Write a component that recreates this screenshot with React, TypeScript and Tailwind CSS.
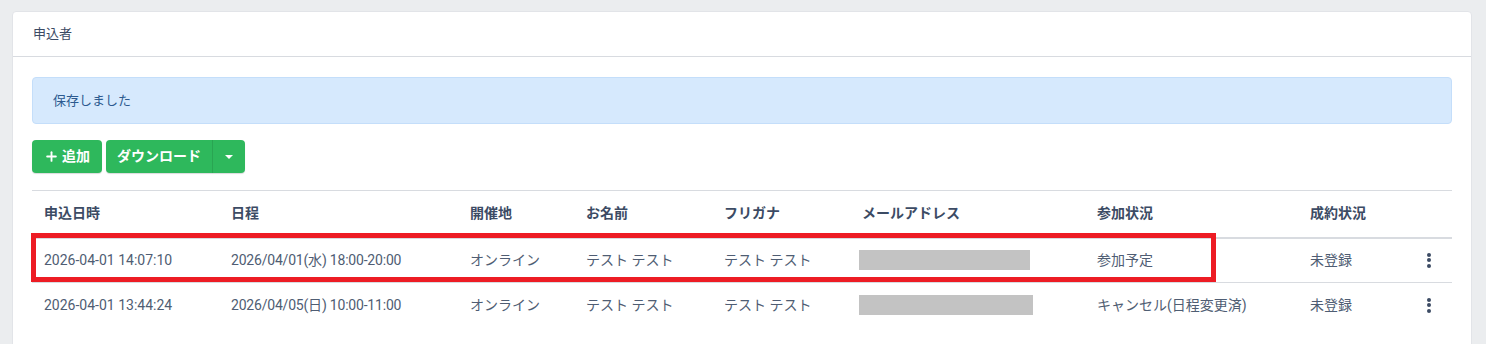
import { Plus } from "lucide-react";

const rows = [
  {
    appliedAt: "2026-04-01 14:07:10",
    schedule: "2026/04/01(水) 18:00-20:00",
    venue: "オンライン",
    name: "テスト テスト",
    kana: "テスト テスト",
    mailWidth: 171,
    status: "参加予定",
    contract: "未登録",
  },
  {
    appliedAt: "2026-04-01 13:44:24",
    schedule: "2026/04/05(日) 10:00-11:00",
    venue: "オンライン",
    name: "テスト テスト",
    kana: "テスト テスト",
    mailWidth: 174,
    status: "キャンセル(日程変更済)",
    contract: "未登録",
  },
];

function Kebab() {
  return (
    <div className="flex flex-col items-center gap-[1.5px] w-[4px]">
      <span className="w-[4px] h-[4px] rounded-full bg-[#3c4b64]" />
      <span className="w-[4px] h-[4px] rounded-full bg-[#3c4b64]" />
      <span className="w-[4px] h-[4px] rounded-full bg-[#3c4b64]" />
    </div>
  );
}

export default function App() {
  return (
    <div
      className="min-h-[344px] bg-[#ebedef] pt-[11px] pl-[12px] pr-[14px] text-[14px] text-[#3c4b64]"
      style={{ fontFamily: 'Roboto, "Noto Sans CJK JP", sans-serif' }}
    >
      <div className="bg-white rounded-[4px] border border-[#e2e4e8] h-[340px]">
        <div className="h-[45px] flex items-center px-[20px] border-b border-[#d8dbe0] text-[13px] text-[#3c4b64]">
          申込者
        </div>
        <div className="px-[19px] pt-[20px]">
          <div className="h-[47px] flex items-center px-[20px] rounded-[4px] border border-[#c4defa] bg-[#d6e9fd] text-[13px] text-[#2c5a8f]">
            保存しました
          </div>

          <div className="flex gap-[4px] mt-[16px]">
            <button className="h-[33px] w-[70px] flex items-center justify-center gap-[3px] rounded-[4px] bg-[#2eb85c] text-white font-bold text-[14px] shadow-[0_1px_1px_rgba(0,0,21,0.15)]">
              <Plus size={15} strokeWidth={3} />
              追加
            </button>
            <div className="h-[33px] w-[139px] flex rounded-[4px] bg-[#2eb85c] text-white font-bold text-[14px] shadow-[0_1px_1px_rgba(0,0,21,0.15)]">
              <span className="flex-1 flex items-center justify-center border-r border-[#29a552]">ダウンロード</span>
              <span className="w-[32px] flex items-center justify-center">
                <span className="w-0 h-0 border-l-[4px] border-r-[4px] border-t-[4px] border-l-transparent border-r-transparent border-t-white" />
              </span>
            </div>
          </div>

          <div className="relative mt-[17px]">
            <table className="w-full table-fixed border-collapse">
              <colgroup>
                <col className="w-[187px]" />
                <col className="w-[239px]" />
                <col className="w-[116px]" />
                <col className="w-[138px]" />
                <col className="w-[138px]" />
                <col className="w-[235px]" />
                <col className="w-[213px]" />
                <col className="w-[100px]" />
                <col />
              </colgroup>
              <thead>
                <tr className="h-[47px] border-t border-[#d8dbe0] border-b-2 border-b-[#d8dbe0]">
                  {["申込日時", "日程", "開催地", "お名前", "フリガナ", "メールアドレス", "参加状況", "成約状況", ""].map((h, i) => (
                    <th key={i} className="text-left font-bold px-[12px] text-[#3c4b64]">
                      {h}
                    </th>
                  ))}
                </tr>
              </thead>
              <tbody>
                {rows.map((r, i) => (
                  <tr
                    key={r.appliedAt}
                    className={`h-[45px] text-[#4f5d73] ${i < rows.length - 1 ? "border-b border-[#d8dbe0]" : ""}`}
                  >
                    <td className="px-[12px]">{r.appliedAt}</td>
                    <td className="px-[12px] tracking-[-0.2px]">{r.schedule}</td>
                    <td className="px-[12px]">{r.venue}</td>
                    <td className="px-[12px]">{r.name}</td>
                    <td className="px-[12px]">{r.kana}</td>
                    <td className="pl-[9px]">
                      <div className="h-[20px] bg-[#c3c3c3]" style={{ width: r.mailWidth }} />
                    </td>
                    <td className="px-[12px]">{r.status}</td>
                    <td className="px-[12px]">{r.contract}</td>
                    <td className="pl-[29px] align-middle">
                      <Kebab />
                    </td>
                  </tr>
                ))}
              </tbody>
            </table>
            <div className="absolute left-[-1px] top-[43px] w-[1185px] h-[49px] border-[5px] border-[#ed1c24] pointer-events-none" />
          </div>
        </div>
      </div>
    </div>
  );
}
